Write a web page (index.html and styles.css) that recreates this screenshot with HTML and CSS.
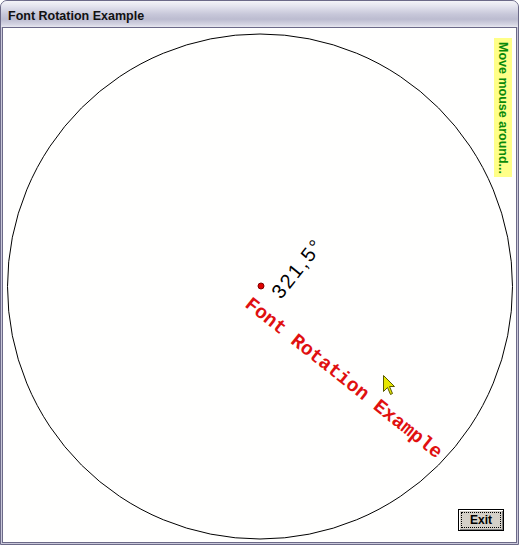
FILE: index.html
```html
<!DOCTYPE html>
<html lang="en">
<head>
    <meta charset="UTF-8">
    <title>Font Rotation Example</title>
    <link rel="stylesheet" href="styles.css">
</head>
<body>
    <div class="window">
        <div class="titlebar">Font Rotation Example</div>
        <div class="client">
            <!-- viewBox uses page coordinates so the drawing matches the screen -->
            <svg class="canvas" width="513" height="514" viewBox="3 28 513 514">
                <circle cx="260" cy="286.5" r="252.5" fill="none" stroke="#000" stroke-width="1"/>
                <circle cx="261" cy="286" r="3" fill="#e00000" stroke="#800000" stroke-width="1"/>
                <text class="angle" transform="translate(281 300) rotate(-51.5)">321,5°</text>
                <text class="rotated" transform="translate(244 306) rotate(38.5)">Font Rotation Example</text>
                <path class="cursor" d="M383.5 375.5 L383.5 391.5 L387.5 387.5 L390.5 394.5 L392.5 393.5 L389.5 386.5 L394.5 386.5 Z"/>
            </svg>
            <div class="hint">Move mouse around...</div>
            <button class="exit"><span>Exit</span></button>
        </div>
    </div>
</body>
</html>
```

FILE: styles.css
```css
body {
    margin: 0;
    padding: 0;
    background-color: #fff;
}

.window {
    width: 519px;
    height: 545px;
    box-sizing: border-box;
    border: 1px solid #6c6a88;
    border-radius: 7px 7px 0 0;
    padding: 0 1px 1px 1px;
    background-color: #cac8da;
    display: flex;
    flex-direction: column;
    overflow: hidden;
}

.titlebar {
    height: 26px;
    margin: 0 -1px;
    padding-left: 7px;
    line-height: 30px;
    font-family: "Liberation Sans", Arial, sans-serif;
    font-weight: bold;
    font-size: 12.5px;
    color: #111;
    background: linear-gradient(to bottom, #f4f4f8 0%, #e4e4ee 20%, #c8c8da 50%, #bcbcd0 70%, #d4d4e2 90%, #e8e8f0 100%);
}

.client {
    flex: 1;
    position: relative;
    border: 1px solid #6c6a88;
    background-color: #fffffe;
}

.canvas {
    display: block;
}

.angle {
    font-family: "Liberation Sans", Arial, sans-serif;
    font-size: 20px;
    letter-spacing: 2px;
    fill: #000;
}

.rotated {
    font-family: "Courier New", "Liberation Mono", monospace;
    font-weight: bold;
    font-size: 19.5px;
    fill: #e01010;
}

.cursor {
    fill: #e6e600;
    stroke: #5a5a00;
    stroke-width: 1;
}

.hint {
    position: absolute;
    left: 491px;
    top: 10px;
    width: 18px;
    height: 139px;
    box-sizing: border-box;
    background-color: #ffff88;
    writing-mode: vertical-rl;
    text-align: center;
    line-height: 18px;
    font-family: "Liberation Sans", Arial, sans-serif;
    font-weight: bold;
    font-size: 12.5px;
    color: #0a8a0a;
}

.exit {
    position: absolute;
    right: 12px;
    bottom: 11px;
    width: 46px;
    height: 22px;
    padding: 2px;
    box-sizing: border-box;
    border: 1px solid #000;
    background-color: #d4d0c8;
    box-shadow: inset 1px 1px 0 #fff, inset -1px -1px 0 #808080;
    font-family: "Liberation Sans", Arial, sans-serif;
    font-weight: bold;
    font-size: 12px;
    color: #000;
}

.exit span {
    display: block;
    height: 100%;
    box-sizing: border-box;
    border: 1px dotted #000;
    line-height: 14px;
}
```
